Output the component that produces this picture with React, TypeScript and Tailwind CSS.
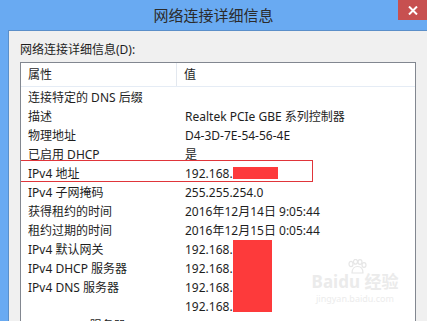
import type { FC } from "react";

const rows: [string, string][] = [
	["连接特定的 DNS 后缀", ""],
	["描述", "Realtek PCIe GBE 系列控制器"],
	["物理地址", "D4-3D-7E-54-56-4E"],
	["已启用 DHCP", "是"],
	["IPv4 地址", "192.168."],
	["IPv4 子网掩码", "255.255.254.0"],
	["获得租约的时间", "2016年12月14日 9:05:44"],
	["租约过期的时间", "2016年12月15日 0:05:44"],
	["IPv4 默认网关", "192.168."],
	["IPv4 DHCP 服务器", "192.168."],
	["IPv4 DNS 服务器", "192.168."],
	["", "192.168."],
	["IPv4 WINS 服务器", ""],
];

const App: FC = () => {
	return (
		<div
			className="w-[427px] h-[321px] overflow-hidden bg-[#69aaf2] flex flex-col text-[#1e1e1e]"
			style={{ fontFamily: '"Noto Sans", "Noto Sans CJK SC", sans-serif' }}
		>
			{/* 标题栏 */}
			<div className="h-[30px] shrink-0 flex items-start relative">
				<div className="flex-1 pt-[4px] text-center text-[15px] text-[#2b2b2b] leading-[22px]">
					网络连接详细信息
				</div>
				<div className="absolute right-0 top-0 w-[29px] h-[20px] bg-[#c75050] flex items-center justify-center">
					<svg width="10" height="9" viewBox="0 0 10 9">
						<path d="M1 0.5 L9 8.5 M9 0.5 L1 8.5" stroke="#fff" strokeWidth="2" />
					</svg>
				</div>
			</div>

			{/* 窗体 */}
			<div className="flex-1 ml-[8px] bg-[#f0f0f0] border-l border-t border-[#5b8fc9] flex flex-col pl-[11px] pr-[11px]">
				<div className="h-[31px] pt-[10px] text-[12px] leading-[18px]">
					网络连接详细信息(D):
				</div>
				<div className="flex-1 bg-white border border-[#828790] border-b-0 relative overflow-hidden">
					<div className="h-[24px] flex text-[12px] border-b border-[#e5ecf5]">
						<div className="w-[156px] pl-[7px] pt-[1px] flex items-center border-r border-[#e3e8ef]">属性</div>
						<div className="pl-[7px] pt-[1px] flex items-center">值</div>
					</div>
					<div className="pt-[1px]">
						{rows.map(([k, v], i) => (
							<div key={i} className="h-[19px] flex text-[12px] leading-[19px] whitespace-nowrap">
								<div className="w-[157px] pl-[7px]">{k}</div>
								<div className="pl-[7px]">{v}</div>
							</div>
						))}
					</div>

					{/* 标注 */}
					<div className="absolute left-[-1px] top-[97px] w-[293px] h-[22px] border border-[#e0353a]" />
					<div className="absolute left-[212px] top-[104px] w-[45px] h-[12px] bg-[#fd3a3b]" />
					<div className="absolute left-[212px] top-[177px] w-[39px] h-[72px] bg-[#fd3a3b]" />

					{/* 水印 */}
					<div className="absolute left-[289px] top-[196px] w-[90px] flex flex-col items-center gap-[3px] text-[#ebebeb]">
						<svg width="22" height="16" viewBox="0 0 22 16" className="mb-[-5px] ml-[4px]">
							<g fill="none" stroke="#e6e6e6" strokeWidth="1.2">
								<ellipse cx="5" cy="5" rx="2" ry="2.6" />
								<ellipse cx="9.5" cy="2.8" rx="2" ry="2.4" />
								<ellipse cx="14" cy="3" rx="2" ry="2.4" />
								<ellipse cx="18" cy="6" rx="2" ry="2.4" />
								<path d="M6 14 C6 9 9 7.5 11.5 7.5 C14 7.5 17 9 17 14 Z" />
							</g>
						</svg>
						<div className="text-[17px] font-bold leading-[18px]">Baidu 经验</div>
						<div className="text-[9px] leading-[10px] text-[#ececec]">jingyan.baidu.com</div>
					</div>
				</div>
			</div>
		</div>
	);
};

export default App;
